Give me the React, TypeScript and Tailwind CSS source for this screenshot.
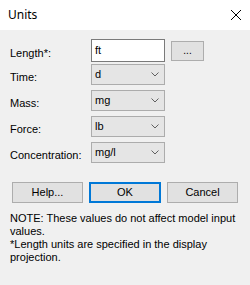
import { ReactNode } from 'react';

const UNIT_ROWS = [
  { label: 'Time:', value: 'd' },
  { label: 'Mass:', value: 'mg' },
  { label: 'Force:', value: 'lb' },
  { label: 'Concentration:', value: 'mg/l' },
];

function Chevron() {
  return (
    <svg width="8" height="5" viewBox="0 0 8 5" className="shrink-0">
      <path d="M0.5 0.5 L4 4 L7.5 0.5" fill="none" stroke="#606060" strokeWidth="1" />
    </svg>
  );
}

function ComboBox({ value }: { value: string }) {
  return (
    <div className="w-[74px] h-[21px] bg-[#e5e5e5] border border-[#acacac] flex items-center justify-between pl-[3px] pr-[5px]">
      <span>{value}</span>
      <Chevron />
    </div>
  );
}

function Button({ children, primary }: { children: ReactNode; primary?: boolean }) {
  return (
    <button
      className={
        primary
          ? 'w-[72px] h-[21px] bg-[#e1e1e1] border-2 border-[#0078d7] flex items-center justify-center'
          : 'w-[71px] h-[21px] bg-[#e1e1e1] border border-[#adadad] flex items-center justify-center'
      }
    >
      {children}
    </button>
  );
}

export default function App() {
  return (
    <div className="w-[250px] h-[285px] bg-[#f0f0f0] flex flex-col text-[11px] text-black font-['Liberation_Sans',Arial,sans-serif]">
      <div className="h-[30px] bg-white flex items-center justify-between pl-[8px] pr-[9px]">
        <span className="text-[12px] font-['Noto_Sans',sans-serif]">Units</span>
        <svg width="10" height="10" viewBox="0 0 10 10">
          <path d="M0 0 L10 10 M10 0 L0 10" stroke="#000" strokeWidth="1" />
        </svg>
      </div>

      <div className="flex flex-col pl-[10px] pt-[9px]">
        <div className="flex items-center h-[23px]">
          <span className="w-[81px] pt-[5px]">Length*:</span>
          <div className="w-[74px] h-[23px] bg-white border border-[#7a7a7a] flex items-center pl-[3px]">ft</div>
          <button className="ml-[6px] w-[33px] h-[20px] bg-[#e1e1e1] border border-[#adadad] flex items-center justify-center text-[10px]">
            ...
          </button>
        </div>

        <div className="flex flex-col gap-[5px] mt-[2px]">
          {UNIT_ROWS.map((row) => (
            <div key={row.label} className="flex items-center h-[21px]">
              <span className="w-[81px] pt-[6px]">{row.label}</span>
              <ComboBox value={row.value} />
            </div>
          ))}
        </div>

        <div className="flex gap-[6px] mt-[19px] pl-[2px]">
          <Button>Help...</Button>
          <Button primary>OK</Button>
          <Button>Cancel</Button>
        </div>

        <p className="mt-[9px] leading-[13px] pr-[10px]">
          NOTE: These values do not affect model input values.
          <br />
          *Length units are specified in the display projection.
        </p>
      </div>
    </div>
  );
}
